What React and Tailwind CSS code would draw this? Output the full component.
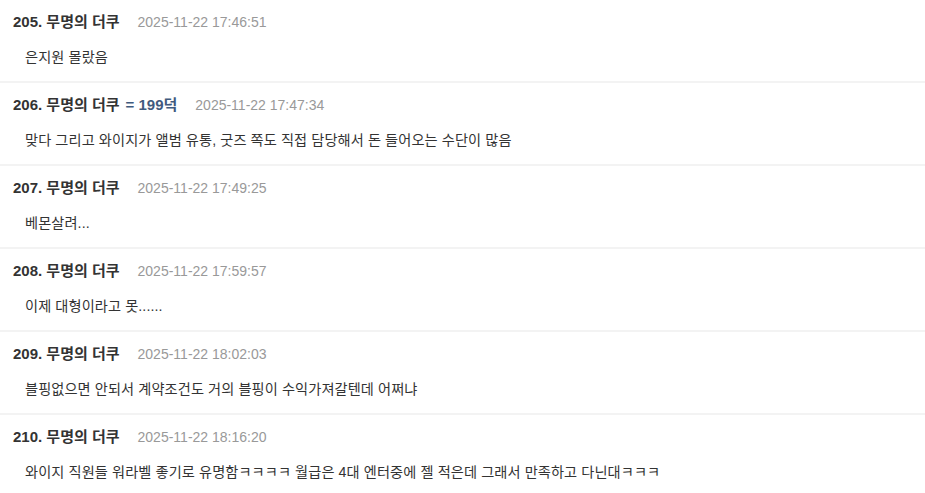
const comments = [
  { no: 205, date: "2025-11-22 17:46:51", body: "은지원 몰랐음" },
  { no: 206, badge: "= 199덕", date: "2025-11-22 17:47:34", body: "맞다 그리고 와이지가 앨범 유통, 굿즈 쪽도 직접 담당해서 돈 들어오는 수단이 많음" },
  { no: 207, date: "2025-11-22 17:49:25", body: "베몬살려..." },
  { no: 208, date: "2025-11-22 17:59:57", body: "이제 대형이라고 못......" },
  { no: 209, date: "2025-11-22 18:02:03", body: "블핑없으면 안되서 계약조건도 거의 블핑이 수익가져갈텐데 어쩌냐" },
  { no: 210, date: "2025-11-22 18:16:20", body: "와이지 직원들 워라벨 좋기로 유명함ㅋㅋㅋㅋ 월급은 4대 엔터중에 젤 적은데 그래서 만족하고 다닌대ㅋㅋㅋ" },
];

export default function App() {
  return (
    <div className="min-h-screen bg-white font-['Liberation_Sans','Noto_Sans_CJK_KR',sans-serif] text-[#333]">
      {comments.map((c) => (
        <div key={c.no} className="border-b-2 border-[#f3f3f3] pl-[13px] pt-[12px] pb-[13px]">
          <div className="flex h-5 items-center">
            <span className="text-[15px] font-bold text-[#333]">
              {c.no}. 무명의 더쿠
              {c.badge && <span className="ml-[6px] text-[#3f5a7e]">{c.badge}</span>}
            </span>
            <span className="ml-[18px] text-[14px] text-[#999]">{c.date}</span>
          </div>
          <div className="mt-[16px] flex h-5 items-center pl-3 text-[14.2px] tracking-[0.1px] text-[#333]">{c.body}</div>
        </div>
      ))}
    </div>
  );
}
